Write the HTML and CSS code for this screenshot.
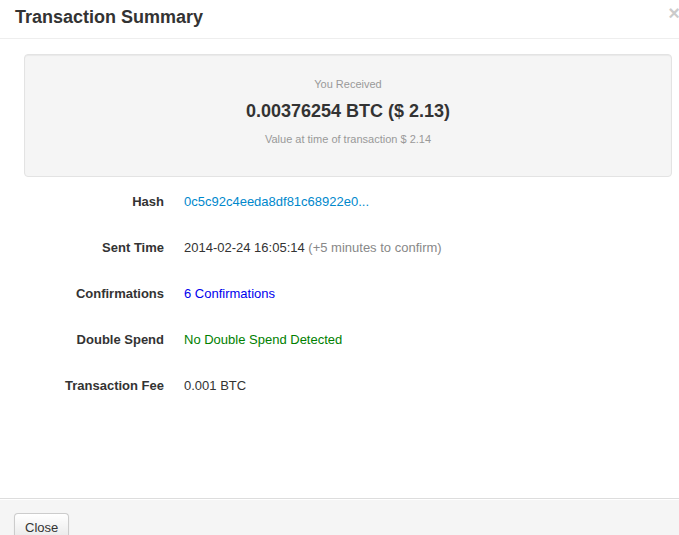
FILE: index.html
```html
<!DOCTYPE html>
<html>
<head>
<meta charset="utf-8">
<link rel="stylesheet" href="styles.css">
</head>
<body>
<div class="modal">
  <div class="modal-header">
    <h3 class="title">Transaction Summary</h3>
    <button class="close" type="button">&times;</button>
  </div>
  <div class="modal-body">
    <div class="well">
      <div class="received-label">You Received</div>
      <div class="amount">0.00376254 BTC ($ 2.13)</div>
      <div class="value-note">Value at time of transaction $ 2.14</div>
    </div>
    <div class="details">
      <div class="row">
        <div class="label">Hash</div>
        <div class="value"><a class="hash-link" href="#">0c5c92c4eeda8df81c68922e0...</a></div>
      </div>
      <div class="row">
        <div class="label">Sent Time</div>
        <div class="value">2014-02-24 16:05:14 <span class="muted">(+5 minutes to confirm)</span></div>
      </div>
      <div class="row">
        <div class="label">Confirmations</div>
        <div class="value confirmations">6 Confirmations</div>
      </div>
      <div class="row">
        <div class="label">Double Spend</div>
        <div class="value ok">No Double Spend Detected</div>
      </div>
      <div class="row">
        <div class="label">Transaction Fee</div>
        <div class="value">0.001 BTC</div>
      </div>
    </div>
  </div>
  <div class="modal-footer">
    <button class="btn" type="button">Close</button>
  </div>
</div>
</body>
</html>
```

FILE: styles.css
```css
html, body {
  margin: 0;
  padding: 0;
  background: #fff;
  overflow: hidden;
}

body {
  font-family: "Liberation Sans", Arial, Helvetica, sans-serif;
  font-size: 13px;
  line-height: 20px;
  color: #333;
  width: 679px;
  height: 535px;
}

.modal {
  display: flex;
  flex-direction: column;
  width: 679px;
}

.modal-header {
  display: flex;
  justify-content: space-between;
  align-items: flex-start;
  padding: 7px 0 11px 15px;
  border-bottom: 1px solid #eee;
}

.title {
  margin: 0;
  font-size: 18px;
  line-height: 20px;
  font-weight: bold;
  color: #333;
}

.close {
  margin: -4px -1px 0 0;
  padding: 0;
  border: 0;
  background: transparent;
  font-family: "Liberation Sans", Arial, sans-serif;
  font-size: 20px;
  font-weight: bold;
  line-height: 20px;
  color: #000;
  opacity: 0.2;
  text-shadow: 0 1px 0 #fff;
  cursor: pointer;
}

.modal-body {
  box-sizing: border-box;
  height: 459px;
  padding: 15px 7px 0 24px;
}

.well {
  box-sizing: border-box;
  height: 123px;
  padding: 19px 19px 0;
  background: #f5f5f5;
  border: 1px solid #e3e3e3;
  border-radius: 4px;
  box-shadow: inset 0 1px 1px rgba(0, 0, 0, 0.05);
  text-align: center;
}

.received-label {
  font-size: 11px;
  line-height: 20px;
  color: #999;
}

.amount {
  margin-top: 7px;
  font-size: 18px;
  font-weight: bold;
  line-height: 20px;
  color: #333;
}

.value-note {
  margin-top: 8px;
  font-size: 11px;
  line-height: 20px;
  color: #999;
}

.details {
  display: flex;
  flex-direction: column;
  padding-top: 2px;
}

.row {
  display: grid;
  grid-template-columns: 140px 1fr;
  column-gap: 20px;
  padding: 13px 0;
}

.label {
  text-align: right;
  font-weight: bold;
  color: #333;
}

.value {
  color: #333;
}

.hash-link {
  color: #0088cc;
  text-decoration: none;
}

.muted {
  color: #888;
}

.confirmations {
  color: #0000ee;
}

.ok {
  color: #008000;
}

.modal-footer {
  padding: 14px 15px 15px 14px;
  background: #f5f5f5;
  border-top: 1px solid #ddd;
  box-shadow: inset 0 1px 0 #fff;
}

.btn {
  display: inline-block;
  padding: 4px 10px;
  font-family: "Liberation Sans", Arial, sans-serif;
  font-size: 13px;
  line-height: 20px;
  color: #333;
  background: linear-gradient(to bottom, #ffffff, #e6e6e6);
  border: 1px solid #cccccc;
  border-bottom-color: #b3b3b3;
  border-radius: 4px;
  box-shadow: inset 0 1px 0 rgba(255, 255, 255, 0.2), 0 1px 2px rgba(0, 0, 0, 0.05);
  cursor: pointer;
}
```
